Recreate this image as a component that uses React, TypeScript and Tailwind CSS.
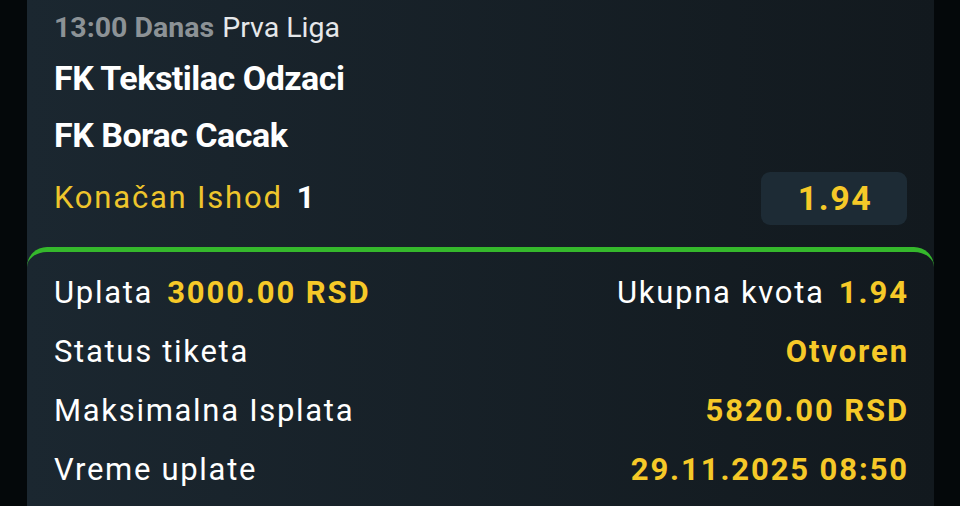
import React from "react";

const Row = ({ label, value }: { label: React.ReactNode; value: React.ReactNode }) => (
  <div className="h-[59px] flex items-center justify-between">
    <div className="flex items-center">{label}</div>
    <div className="font-bold text-[#f6c928] tracking-[1.9px] mr-[-2px]">{value}</div>
  </div>
);

export default function App() {
  return (
    <div
      className="w-[960px] h-[506px] overflow-hidden bg-[#04080a] flex"
      style={{ fontFamily: "Roboto, 'Noto Sans', sans-serif" }}
    >
      <div className="ml-[27px] w-[907px] h-full bg-gradient-to-r from-[#1b2730] to-[#12191e] flex flex-col">
        <div className="pl-[27px] pr-[27px]">
          <div className="h-[57px] flex items-center text-[28.5px]">
            <span className="font-bold text-[#8c9296]">13:00 Danas</span>
            <span className="ml-[8px] text-[#e6e8ea]">Prva Liga</span>
          </div>
          <div className="h-[43px] flex items-center text-[34px] font-bold text-white tracking-[-0.5px]">
            FK Tekstilac Odzaci
          </div>
          <div className="h-[70px] flex items-center text-[34px] font-bold text-white tracking-[-0.5px]">
            FK Borac Cacak
          </div>
          <div className="h-[56px] flex items-center justify-between text-[31px]">
            <div className="flex items-center">
              <span className="text-[#eec52c] tracking-[1.8px]">Konačan Ishod</span>
              <span className="ml-[14px] font-bold text-white">1</span>
            </div>
            <div className="w-[146px] h-[53px] rounded-[9px] bg-[#1d2b35] flex items-center justify-center font-bold text-[#f6c928] text-[34px] tracking-[1.5px] pl-[2px]">
              1.94
            </div>
          </div>
        </div>
        <div className="mt-[21px] flex-1 rounded-t-[20px] border-t-[5px] border-[#35b82c] bg-gradient-to-r from-[#1b2730] to-[#12191e] pt-[12px] pl-[27px] pr-[27px] text-[31px] text-white tracking-[1.7px]">
          <div className="h-[59px] flex items-center justify-between">
            <div className="flex items-center">
              <span>Uplata</span>
              <span className="ml-[14px] font-bold text-[#f6c928] tracking-[1.9px]">3000.00 RSD</span>
            </div>
            <div className="flex items-center mr-[-2px]">
              <span>Ukupna kvota</span>
              <span className="ml-[14px] font-bold text-[#f6c928] tracking-[2px]">1.94</span>
            </div>
          </div>
          <Row label={<span>Status tiketa</span>} value="Otvoren" />
          <Row label={<span>Maksimalna Isplata</span>} value="5820.00 RSD" />
          <Row label={<span>Vreme uplate</span>} value="29.11.2025 08:50" />
        </div>
      </div>
    </div>
  );
}
